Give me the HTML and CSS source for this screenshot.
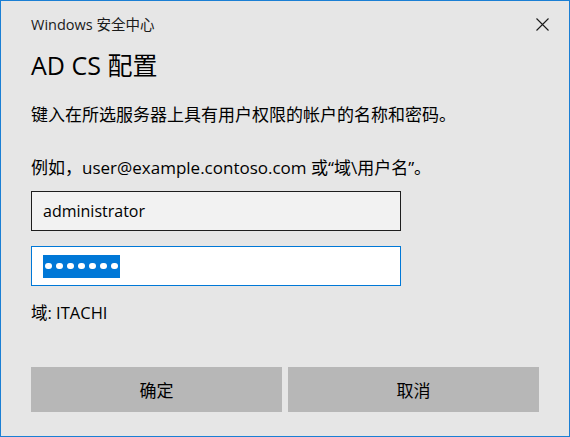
FILE: index.html
```html
<!DOCTYPE html>
<html lang="zh-CN">
<head>
<meta charset="utf-8">
<title>Windows 安全中心</title>
<link rel="stylesheet" href="styles.css">
</head>
<body>
<div class="dialog">
  <div class="titlebar">
    <span class="app-name">Windows 安全中心</span>
    <svg class="close" width="13" height="13" viewBox="0 0 13 13" aria-hidden="true">
      <path d="M0.5 0.5 L12.5 12.5 M12.5 0.5 L0.5 12.5" stroke="#1a1a1a" stroke-width="1.1" fill="none"/>
    </svg>
  </div>
  <h1 class="heading">AD CS 配置</h1>
  <p class="desc">键入在所选服务器上具有用户权限的帐户的名称和密码。</p>
  <p class="desc example">例如，user@example.contoso.com 或“域\用户名”。</p>
  <div class="field user">administrator</div>
  <div class="field pass"><span class="sel"><i></i><i></i><i></i><i></i><i></i><i></i><i></i></span></div>
  <div class="domain">域: ITACHI</div>
  <div class="buttons">
    <div class="btn">确定</div>
    <div class="btn">取消</div>
  </div>
</div>
</body>
</html>
```
FILE: styles.css
```css
html, body {
  margin: 0;
  padding: 0;
}
body {
  width: 570px;
  height: 437px;
  font-family: "Segoe UI", "Open Sans", "Noto Sans CJK SC", sans-serif;
  color: #000;
}
.dialog {
  box-sizing: border-box;
  width: 570px;
  height: 437px;
  border: 1px solid #1a7fd4;
  background: #e6e6e6;
  display: flex;
  flex-direction: column;
  padding: 0 30px 0 30px;
}
.titlebar {
  display: flex;
  align-items: center;
  justify-content: space-between;
  height: 20px;
  margin-top: 12px;
  margin-right: -10px;
}
.app-name {
  font-size: 14.5px;
  color: #1a1a1a;
}
.close {
  display: block;
  margin-top: 2px;
}
.heading {
  margin: 16px 0 0 0;
  font-weight: normal;
  font-size: 25px;
  line-height: 32px;
  color: #000;
}
.desc {
  margin: 22px 0 0 0;
  font-size: 17px;
  line-height: 24px;
  color: #000;
}
.desc.example {
  margin-top: 29px;
}
.field {
  box-sizing: border-box;
  width: 370px;
  height: 40px;
  border: 1px solid #1e1e1e;
  background: #f2f2f2;
  display: flex;
  align-items: center;
  padding-left: 11px;
  font-size: 16px;
}
.field.user {
  margin-top: 11px;
}
.field.pass {
  margin-top: 15px;
  border-color: #0078d7;
  background: #ffffff;
}
.sel {
  display: inline-flex;
  align-items: center;
  gap: 4.5px;
  height: 23px;
  padding: 0 2px 0 2px;
  background: #0078d7;
}
.sel i {
  display: block;
  width: 6.5px;
  height: 6.5px;
  border-radius: 50%;
  background: #fff;
}
.domain {
  margin-top: 16px;
  font-size: 16.5px;
  line-height: 22px;
}
.buttons {
  display: flex;
  gap: 6px;
  margin-top: 43px;
}
.btn {
  flex: 0 0 251px;
  height: 45px;
  background: #b7b7b7;
  display: flex;
  align-items: center;
  justify-content: center;
  font-size: 17px;
  color: #000;
}
```
